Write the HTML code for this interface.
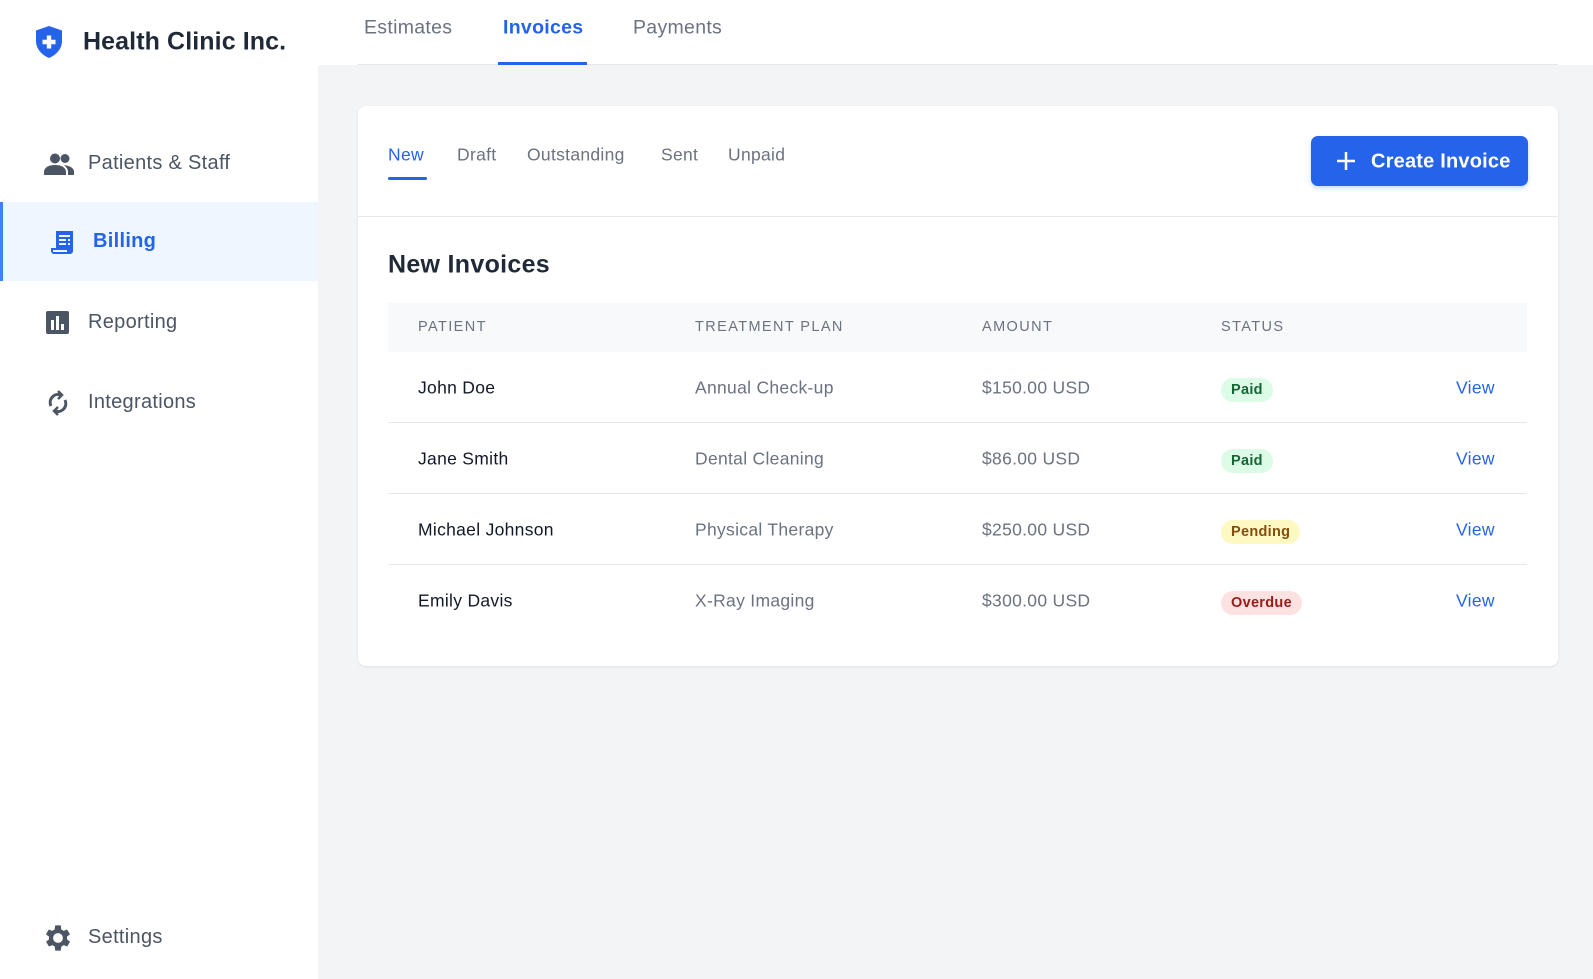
<!DOCTYPE html>
<html><head><meta charset="utf-8"><style>
*{margin:0;padding:0;box-sizing:border-box}
body{width:1593px;height:979px;background:#f3f4f6;font-family:"Liberation Sans",sans-serif;position:relative;overflow:hidden;color:#111827;letter-spacing:0.3px}
.abs{position:absolute}
.side{position:absolute;left:0;top:0;width:318px;height:979px;background:#fff}
.top{position:absolute;left:318px;top:0;width:1275px;height:65px;background:#fff}
.nav{position:absolute;left:0;width:318px;height:79px;display:flex;align-items:center;font-size:20px;color:#4b5563}
.nav svg{position:absolute;left:44px}
.nav span{position:absolute;left:88px}
.t{position:absolute;font-size:19.5px;color:#6b7280;transform:translateY(-50%)}
.card{position:absolute;left:358px;top:106px;width:1200px;height:560px;background:#fff;border-radius:8px;box-shadow:0 1px 3px rgba(0,0,0,.08)}
.st{position:absolute;top:155px;font-size:17.5px;color:#6b7280;transform:translateY(-50%)}
.th{position:absolute;top:327px;font-size:14.5px;letter-spacing:1.4px;color:#6b7280;transform:translateY(-50%)}
.c{position:absolute;font-size:17.5px;transform:translateY(-50%)}
.b{position:absolute;font-size:14.5px;font-weight:bold;padding:4px 10px;border-radius:12px;transform:translateY(-50%)}
.v{position:absolute;left:1456px;font-size:17.5px;color:#2563eb;transform:translateY(-50%)}
.hr{position:absolute;left:388px;width:1139px;height:1px;background:#e5e7eb}
</style></head><body>
<div class="side">
 <svg class="abs" style="left:34px;top:25px" width="30" height="34" viewBox="0 0 30 34"><path d="M15 1 L28 5.5 V16 C28 24 22 30 15 33 C8 30 2 24 2 16 V5.5 Z" fill="#2563eb"/><path d="M12.8 10.5h4.4v4.3h4.3v4.4h-4.3v4.3h-4.4v-4.3H8.5v-4.4h4.3z" fill="#fff"/></svg>
 <div class="abs" style="left:83px;top:42px;transform:translateY(-50%);font-size:25px;font-weight:bold;color:#1f2937;letter-spacing:0.1px">Health Clinic Inc.</div>
 <div class="nav" style="top:124px"><svg width="30" height="22" viewBox="0 0 30 22" fill="#4b5563"><circle cx="11" cy="5.5" r="5"/><path d="M0 22v-3c0-4 4-7 11-7s11 3 11 7v3z"/><circle cx="21" cy="5.5" r="4.5"/><path d="M20 12.2c5 .2 10 2.5 10 6.3v3.5h-6v-3c0-2.8-1.5-5-4-6.8z"/></svg><span>Patients &amp; Staff</span></div>
 <div class="nav" style="top:202px;background:#eff6ff;color:#2563eb;font-weight:bold"><div class="abs" style="left:0;top:0;width:3px;height:79px;background:#3b82f6"></div><svg style="left:51px" width="24" height="26" viewBox="0 0 24 26" fill="#2563eb"><path d="M5 2h17v20a3 3 0 0 1-3 3H3a3 3 0 0 1-3-3v-3h5z" /><rect x="8" y="6" width="11" height="2" fill="#eff6ff"/><rect x="8" y="10" width="7" height="2" fill="#eff6ff"/><rect x="17" y="10" width="2" height="2" fill="#eff6ff"/><rect x="8" y="14" width="7" height="2" fill="#eff6ff"/><rect x="17" y="14" width="2" height="2" fill="#eff6ff"/><path d="M2 21h14v2H2z" fill="#eff6ff"/></svg><span style="left:93px">Billing</span></div>
 <div class="nav" style="top:283px"><svg style="left:46px" width="23" height="23" viewBox="0 0 23 23"><rect width="23" height="23" rx="2" fill="#4b5563"/><rect x="5" y="9" width="3" height="10" fill="#fff"/><rect x="10" y="5" width="3" height="14" fill="#fff"/><rect x="15" y="13" width="3" height="6" fill="#fff"/></svg><span>Reporting</span></div>
 <div class="nav" style="top:363px"><svg style="left:47px" width="22" height="26" viewBox="0 0 22 26" fill="none" stroke="#4b5563" stroke-width="3"><path d="M4 16A8 8 0 0 1 14 5"/><path d="M18 10A8 8 0 0 1 8 21"/><path d="M11 1l4 4-4 4M11 25l-4-4 4-4" stroke-width="2.5"/></svg><span>Integrations</span></div>
 <div class="nav" style="top:898px"><svg style="left:44px" width="28" height="28" viewBox="3 2 20 20" fill="#4b5563"><path d="M19.4 13a7.5 7.5 0 0 0 0-2l2.1-1.6-2-3.5-2.5 1a7.6 7.6 0 0 0-1.7-1L15 3h-4l-.4 2.9a7.6 7.6 0 0 0-1.7 1l-2.5-1-2 3.5L6.6 11a7.5 7.5 0 0 0 0 2l-2.1 1.6 2 3.5 2.5-1a7.6 7.6 0 0 0 1.7 1L11 21h4l.4-2.9a7.6 7.6 0 0 0 1.7-1l2.5 1 2-3.5zM13 15.5a3.5 3.5 0 1 1 0-7 3.5 3.5 0 0 1 0 7z"/></svg><span>Settings</span></div>
</div>
<div class="top"></div>
<div class="abs" style="left:358px;top:64px;width:1200px;height:1px;background:#e5e7eb"></div>
<div class="t" style="left:364px;top:28px">Estimates</div>
<div class="t" style="left:503px;top:28px;color:#2563eb;font-weight:bold">Invoices</div>
<div class="abs" style="left:498px;top:62px;width:89px;height:3px;background:#2563eb"></div>
<div class="t" style="left:633px;top:28px">Payments</div>
<div class="card"></div>
<div class="st" style="left:388px;color:#2563eb">New</div>
<div class="abs" style="left:388px;top:177px;width:39px;height:3px;background:#2563eb;border-radius:2px"></div>
<div class="st" style="left:457px">Draft</div>
<div class="st" style="left:527px">Outstanding</div>
<div class="st" style="left:661px">Sent</div>
<div class="st" style="left:728px">Unpaid</div>
<div class="abs" style="left:1311px;top:136px;width:217px;height:50px;background:#2563eb;border-radius:7px;box-shadow:0 2px 4px rgba(37,99,235,.25)"></div>
<svg class="abs" style="left:1336px;top:151px" width="20" height="20" viewBox="0 0 20 20" stroke="#fff" stroke-width="2.5"><path d="M10 1v18M1 10h18"/></svg>
<div class="abs" style="left:1371px;top:162px;transform:translateY(-50%);font-size:20px;font-weight:bold;color:#fff;letter-spacing:0.2px">Create Invoice</div>
<div class="abs" style="left:358px;top:216px;width:1200px;height:1px;background:#e5e7eb"></div>
<div class="abs" style="left:388px;top:265px;transform:translateY(-50%);font-size:25px;font-weight:bold;color:#1f2937">New Invoices</div>
<div class="abs" style="left:388px;top:303px;width:1139px;height:49px;background:#f8f9fb"></div>
<div class="th" style="left:418px">PATIENT</div>
<div class="th" style="left:695px">TREATMENT PLAN</div>
<div class="th" style="left:982px">AMOUNT</div>
<div class="th" style="left:1221px">STATUS</div>
<div class="hr" style="top:422px"></div><div class="hr" style="top:493px"></div><div class="hr" style="top:564px"></div>

<div class="c" style="left:418px;top:388px">John Doe</div><div class="c" style="left:695px;top:388px;color:#6b7280">Annual Check-up</div><div class="c" style="left:982px;top:388px;color:#6b7280">$150.00 USD</div><div class="b" style="left:1221px;top:390px;background:#dcfce7;color:#166534">Paid</div><div class="v" style="top:388px">View</div>
<div class="c" style="left:418px;top:459px">Jane Smith</div><div class="c" style="left:695px;top:459px;color:#6b7280">Dental Cleaning</div><div class="c" style="left:982px;top:459px;color:#6b7280">$86.00 USD</div><div class="b" style="left:1221px;top:461px;background:#dcfce7;color:#166534">Paid</div><div class="v" style="top:459px">View</div>
<div class="c" style="left:418px;top:530px">Michael Johnson</div><div class="c" style="left:695px;top:530px;color:#6b7280">Physical Therapy</div><div class="c" style="left:982px;top:530px;color:#6b7280">$250.00 USD</div><div class="b" style="left:1221px;top:532px;background:#fef9c3;color:#854d0e">Pending</div><div class="v" style="top:530px">View</div>
<div class="c" style="left:418px;top:601px">Emily Davis</div><div class="c" style="left:695px;top:601px;color:#6b7280">X-Ray Imaging</div><div class="c" style="left:982px;top:601px;color:#6b7280">$300.00 USD</div><div class="b" style="left:1221px;top:603px;background:#fee2e2;color:#991b1b">Overdue</div><div class="v" style="top:601px">View</div>
</body></html>
